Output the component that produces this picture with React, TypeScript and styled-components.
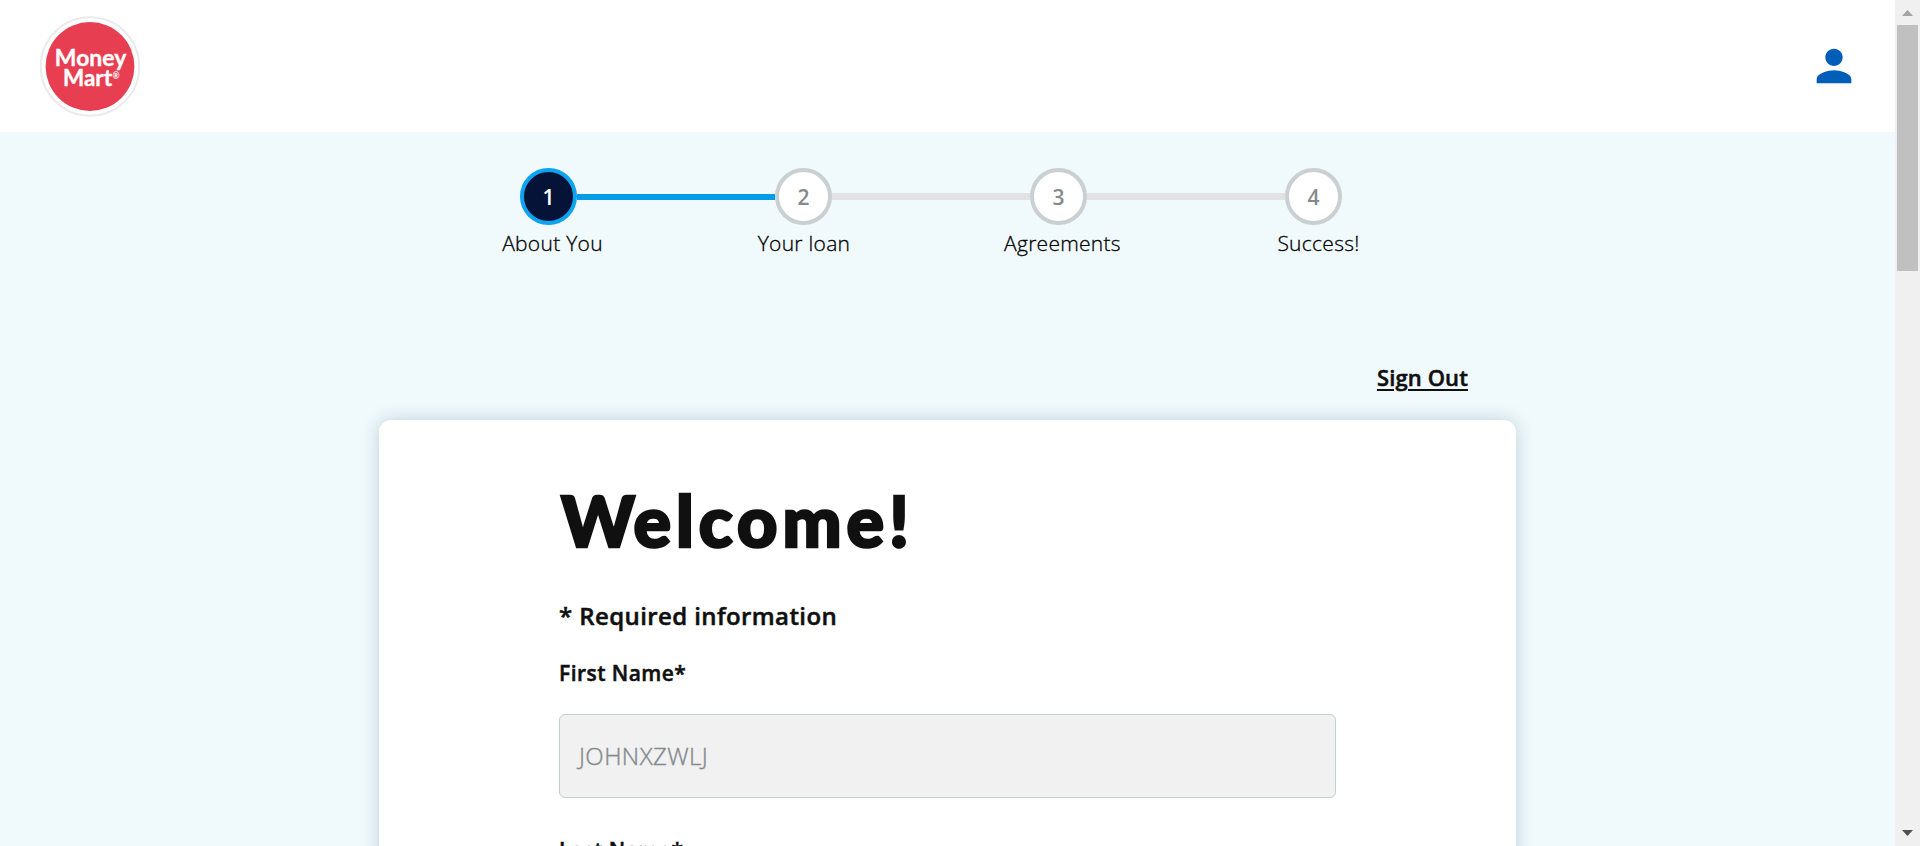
import React from 'react';
import styled, { createGlobalStyle } from 'styled-components';

const GlobalStyle = createGlobalStyle`
  * { box-sizing: border-box; }
  html, body { margin: 0; padding: 0; overflow: hidden; }
  body { font-family: 'Open Sans', 'Noto Sans', sans-serif; color: #101010; }
`;

const Window = styled.div`
  display: flex;
  height: 846px;
  overflow: hidden;
`;

const Page = styled.div`
  display: flex;
  flex-direction: column;
  flex: 1;
  min-width: 0;
  overflow: hidden;
  background: #f0f9fc;
`;

const Header = styled.header`
  display: flex;
  flex: none;
  align-items: center;
  justify-content: space-between;
  height: 132px;
  padding: 0 35.5px 0 38px;
  background: #fff;
`;

const AccountButton = styled.button`
  display: flex;
  padding: 0;
  border: 0;
  background: none;
  color: #005eb8;
`;

const Stepper = styled.ol`
  display: flex;
  flex: none;
  width: 1020px;
  height: 97px;
  margin: 36px 0 0 421px;
  padding: 0;
  list-style: none;
`;

const StepItem = styled.li`
  display: flex;
  flex-direction: column;
  align-items: center;
  width: 255px;
`;

const StepTrack = styled.div`
  display: flex;
  align-items: center;
  width: 100%;
  height: 57px;
`;

const Connector = styled.span<{ $tone: 'done' | 'todo' | 'none' }>`
  flex: 1;
  height: ${p => (p.$tone === 'done' ? 6 : 7)}px;
  background: ${p => ({ done: '#009ce6', todo: '#e2e2e2', none: 'transparent' })[p.$tone]};
`;

const StepCircle = styled.span<{ $active: boolean }>`
  display: flex;
  align-items: center;
  justify-content: center;
  width: 57px;
  height: 57px;
  border: 4px solid ${p => (p.$active ? '#0ca4ee' : '#cacfd2')};
  border-radius: 50%;
  background: ${p => (p.$active ? '#051338' : '#fff')};
  color: ${p => (p.$active ? '#fff' : '#84898c')};
  font-size: 21px;
  font-weight: 600;
`;

const StepLabel = styled.span<{ $shift: number }>`
  margin-top: 4px;
  padding-left: ${p => p.$shift}px;
  font-size: 21px;
  font-weight: 300;
  line-height: 29px;
  letter-spacing: 0.28px;
  white-space: nowrap;
  color: #000;
  -webkit-text-stroke: 0.3px #000;
`;

const SignOutRow = styled.div`
  display: flex;
  flex: none;
  justify-content: flex-end;
  height: 155px;
  padding: 97px 427px 0 0;
`;

const SignOut = styled.a`
  font-size: 22px;
  font-weight: 600;
  line-height: 30px;
  letter-spacing: 0.12px;
  text-decoration: underline;
  text-decoration-thickness: 2px;
  text-underline-offset: 3px;
  -webkit-text-stroke: 0.5px #101010;
`;

const Card = styled.main`
  display: flex;
  flex: none;
  flex-direction: column;
  width: 1137px;
  height: 900px;
  margin-left: 379px;
  padding: 57px 180px 0;
  border-radius: 12px;
  background: #fff;
  box-shadow: 0 0 18px rgba(20, 75, 95, 0.22);
`;

const Title = styled.h1`
  margin: 0 0 0 2px;
  font-family: Lato, 'Open Sans', sans-serif;
  font-size: 70px;
  font-weight: 900;
  line-height: 86px;
  letter-spacing: 5px;
  -webkit-text-stroke: 2.6px #101010;

  &::first-letter {
    letter-spacing: -1.5px;
  }
`;

const Required = styled.p`
  margin: 37px 0 0;
  font-size: 24px;
  font-weight: 600;
  line-height: 32px;
  letter-spacing: 0.4px;
  -webkit-text-stroke: 0.5px #101010;
`;

const Field = styled.div`
  display: flex;
  flex-direction: column;
  margin-bottom: 37px;
`;

const Fields = styled.form`
  display: flex;
  flex-direction: column;
  margin-top: 26px;
`;

const Label = styled.label`
  height: 56px;
  font-size: 21px;
  font-weight: 600;
  line-height: 30px;
  letter-spacing: 0.45px;
  -webkit-text-stroke: 0.5px #101010;
`;

const Input = styled.div`
  display: flex;
  align-items: center;
  height: 84px;
  padding: 0 19px 1px;
  border: 1px solid #c0ced6;
  border-radius: 6px;
  background: #f1f1f1;
  color: #858a8d;
  font-size: 24px;
  font-weight: 300;
  letter-spacing: 0.45px;
  -webkit-text-stroke: 0.4px #858a8d;
`;

const Scrollbar = styled.div`
  display: flex;
  flex: none;
  flex-direction: column;
  align-items: center;
  justify-content: space-between;
  width: 25px;
  background: #f0f0f0;
`;

const ScrollThumb = styled.div`
  width: 21px;
  height: 246px;
  margin-bottom: auto;
  background: #c0c0c0;
`;

const ScrollArrow = styled.svg`
  display: block;
  width: 25px;
  height: 25px;
`;

const steps = [
  { label: 'About You', shift: 8 },
  { label: 'Your loan', shift: 1 },
  { label: 'Agreements', shift: 8 },
  { label: 'Success!', shift: 10 },
];

function Logo() {
  return (
    <svg width="104" height="104" viewBox="0 0 104 104" role="img" aria-label="Money Mart">
      <circle cx="52" cy="52.5" r="49.2" fill="#fff" stroke="#ebebeb" strokeWidth="2" />
      <circle cx="52" cy="52.5" r="44.4" fill="#e83e52" />
      <g fill="#fff" fontFamily="Lato, sans-serif" fontWeight="700" stroke="#fff" strokeWidth="0.35">
        <text x="16.8" y="52" fontSize="23" textLength="71.5" lengthAdjust="spacingAndGlyphs">Money</text>
        <text x="25" y="72.3" fontSize="23" textLength="49" lengthAdjust="spacingAndGlyphs">Mart</text>
        <text x="74.4" y="65.4" fontSize="8.5" strokeWidth="0">®</text>
      </g>
    </svg>
  );
}

function PersonIcon() {
  return (
    <svg width="52" height="52" viewBox="0 0 24 24" fill="currentColor">
      <path d="M12 12c2.21 0 4-1.79 4-4s-1.79-4-4-4-4 1.79-4 4 1.79 4 4 4zm0 2c-2.67 0-8 1.34-8 4v2h16v-2c0-2.66-5.33-4-8-4z" />
    </svg>
  );
}

export default function App() {
  return (
    <>
      <GlobalStyle />
      <Window>
        <Page>
          <Header>
            <Logo />
            <AccountButton aria-label="Account"><PersonIcon /></AccountButton>
          </Header>
          <Stepper>
            {steps.map((s, i) => (
              <StepItem key={s.label}>
                <StepTrack>
                  <Connector $tone={i === 0 ? 'none' : i === 1 ? 'done' : 'todo'} />
                  <StepCircle $active={i === 0}>{i + 1}</StepCircle>
                  <Connector $tone={i === 3 ? 'none' : i === 0 ? 'done' : 'todo'} />
                </StepTrack>
                <StepLabel $shift={s.shift}>{s.label}</StepLabel>
              </StepItem>
            ))}
          </Stepper>
          <SignOutRow><SignOut>Sign Out</SignOut></SignOutRow>
          <Card>
            <Title>Welcome!</Title>
            <Required>* Required information</Required>
            <Fields>
              <Field>
                <Label>First Name*</Label>
                <Input>JOHNXZWLJ</Input>
              </Field>
              <Field>
                <Label>Last Name*</Label>
                <Input />
              </Field>
            </Fields>
          </Card>
        </Page>
        <Scrollbar>
          <ScrollArrow viewBox="0 0 25 25"><path d="M7 16h11l-5.5-6z" fill="#a3a3a3" /></ScrollArrow>
          <ScrollThumb />
          <ScrollArrow viewBox="0 0 25 25"><path d="M7 9h11l-5.5 6z" fill="#505050" /></ScrollArrow>
        </Scrollbar>
      </Window>
    </>
  );
}
